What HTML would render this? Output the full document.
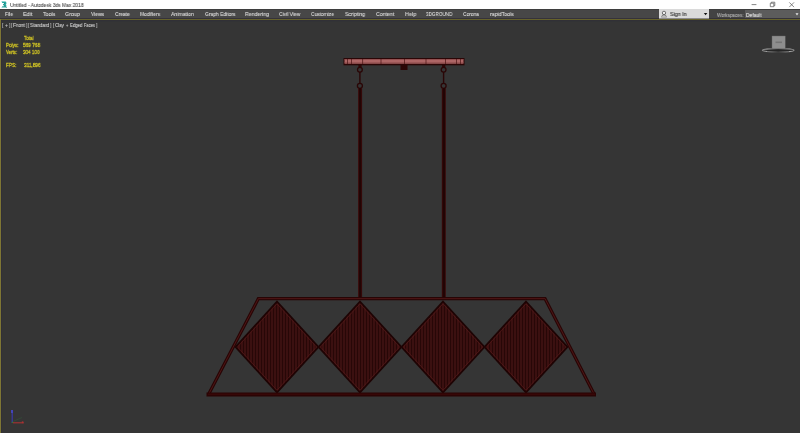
<!DOCTYPE html>
<html><head><meta charset="utf-8">
<style>
html,body{margin:0;padding:0;}
body{width:800px;height:433px;overflow:hidden;position:relative;background:#353535;font-family:"Liberation Sans",sans-serif;}
.abs{position:absolute;}
.t{position:absolute;white-space:nowrap;line-height:1;transform-origin:0 0;-webkit-text-stroke:0.3px currentColor;will-change:transform;}
</style></head><body>
<div class="abs" style="left:0;top:0;width:800px;height:9px;background:#fff"></div>
<div class="abs" style="left:0;top:9px;width:800px;height:9px;background:#474747"></div>
<div class="abs" style="left:0;top:9px;width:800px;height:1px;background:#3e3e3e"></div>
<div class="abs" style="left:0;top:18px;width:800px;height:1px;background:#35323a"></div>
<div class="abs" style="left:0;top:19px;width:800px;height:1px;background:#66622a"></div>
<div class="abs" style="left:0;top:20px;width:800px;height:1px;background:#313036"></div><div class="abs" style="left:0;top:21px;width:800px;height:1px;background:#323335"></div>
<div class="abs" style="left:1px;top:20px;width:1px;height:413px;background:#313036"></div><div class="abs" style="left:0;top:19px;width:1px;height:414px;background:#7e7634"></div>

<!-- app icon -->
<svg class="abs" style="left:0px;top:0px" width="9" height="9" viewBox="0 0 9 9">
  <path d="M1.4 1.6 H5.2 Q6.4 1.6 6.4 3 V3.6 Q6.4 4.4 5.6 4.6 Q6.4 4.9 6.4 5.8 V6.6 Q6.4 7.6 5.2 7.6 H1.4 L2.4 6.3 H4.4 V5.2 H3 V4 H4.4 V2.9 H2.4 Z" fill="#24a8a0"/>
  <path d="M4.4 2.9 V4 M4.4 5.2 V6.3" stroke="#0d6e6a" stroke-width="0.8"/>
  <path d="M5.6 6.8 L6.6 7.8" stroke="#0d6e6a" stroke-width="0.8"/>
</svg>
<!-- window controls -->
<svg class="abs" style="left:748px;top:0px" width="52" height="9" viewBox="0 0 52 9">
  <path d="M3.6 4.6 H8.4" stroke="#666" stroke-width="0.8"/>
  <path d="M22.3 3.2 H25.8 V6.7 H22.3 Z M23.3 3.2 V2.2 H26.8 V5.7 H25.8" fill="none" stroke="#555" stroke-width="0.7"/>
  <path d="M41.3 2.4 L46 7.1 M46 2.4 L41.3 7.1" stroke="#555" stroke-width="0.7"/>
</svg>
<!-- sign in -->
<div class="abs" style="left:659px;top:9px;width:50px;height:9px;background:#dadada"></div><div class="abs" style="left:659px;top:18px;width:50px;height:1px;background:#8c8a8e"></div>
<svg class="abs" style="left:660px;top:10px" width="8" height="8" viewBox="0 0 8 8"><circle cx="4" cy="2.9" r="1.7" fill="#f0f0f0" stroke="#4a4a4a" stroke-width="0.75"/><path d="M1.7 6.6 Q1.9 4.9 4 4.9 Q6.1 4.9 6.3 6.6" fill="none" stroke="#4a4a4a" stroke-width="0.7"/><path d="M1.2 7.1 H6.8" stroke="#6a6a6a" stroke-width="0.6"/></svg>
<svg class="abs" style="left:703px;top:12px" width="5" height="4" viewBox="0 0 5 4"><path d="M0.8 1 H4.4 L2.6 3.3 Z" fill="#111"/></svg>
<!-- workspaces -->
<div class="abs" style="left:709px;top:10px;width:36px;height:8px;background:#434343"></div>
<div class="abs" style="left:744.5px;top:10px;width:55.5px;height:8px;background:#5c5c5c"></div>
<svg class="abs" style="left:795px;top:13px" width="4" height="3" viewBox="0 0 4 3"><path d="M0.5 0.3 H3.5 L2 2.5 Z" fill="#e8e8e8"/></svg>

<div class="t" style="left:9.62px;top:3px;font-size:5.50px;color:#4a4a4a;transform:scaleX(0.895);-webkit-text-stroke:0.1px #4a4a4a;">Untitled - Autodesk 3ds Max 2018</div>
<div class="t" style="left:4.89px;top:11px;font-size:6.10px;color:#dadada;transform:scaleX(0.816);-webkit-text-stroke:0.12px #dadada;">File</div>
<div class="t" style="left:22.55px;top:11px;font-size:6.10px;color:#dadada;transform:scaleX(0.903);-webkit-text-stroke:0.12px #dadada;">Edit</div>
<div class="t" style="left:42.88px;top:11px;font-size:6.10px;color:#dadada;transform:scaleX(0.864);-webkit-text-stroke:0.12px #dadada;">Tools</div>
<div class="t" style="left:65.33px;top:11px;font-size:6.10px;color:#dadada;transform:scaleX(0.878);-webkit-text-stroke:0.12px #dadada;">Group</div>
<div class="t" style="left:91.18px;top:11px;font-size:6.10px;color:#dadada;transform:scaleX(0.804);-webkit-text-stroke:0.12px #dadada;">Views</div>
<div class="t" style="left:114.95px;top:11px;font-size:6.10px;color:#dadada;transform:scaleX(0.806);-webkit-text-stroke:0.12px #dadada;">Create</div>
<div class="t" style="left:140.29px;top:11px;font-size:6.10px;color:#dadada;transform:scaleX(0.812);-webkit-text-stroke:0.12px #dadada;">Modifiers</div>
<div class="t" style="left:171.49px;top:11px;font-size:6.10px;color:#dadada;transform:scaleX(0.842);-webkit-text-stroke:0.12px #dadada;">Animation</div>
<div class="t" style="left:204.95px;top:11px;font-size:6.10px;color:#dadada;transform:scaleX(0.808);-webkit-text-stroke:0.12px #dadada;">Graph Editors</div>
<div class="t" style="left:245.27px;top:11px;font-size:6.10px;color:#dadada;transform:scaleX(0.855);-webkit-text-stroke:0.12px #dadada;">Rendering</div>
<div class="t" style="left:279.25px;top:11px;font-size:6.10px;color:#dadada;transform:scaleX(0.807);-webkit-text-stroke:0.12px #dadada;">Civil View</div>
<div class="t" style="left:311.46px;top:11px;font-size:6.10px;color:#dadada;transform:scaleX(0.797);-webkit-text-stroke:0.12px #dadada;">Customize</div>
<div class="t" style="left:345.26px;top:11px;font-size:6.10px;color:#dadada;transform:scaleX(0.846);-webkit-text-stroke:0.12px #dadada;">Scripting</div>
<div class="t" style="left:375.94px;top:11px;font-size:6.10px;color:#dadada;transform:scaleX(0.857);-webkit-text-stroke:0.12px #dadada;">Content</div>
<div class="t" style="left:405.05px;top:11px;font-size:6.10px;color:#dadada;transform:scaleX(0.891);-webkit-text-stroke:0.12px #dadada;">Help</div>
<div class="t" style="left:426.32px;top:11px;font-size:6.10px;color:#dadada;transform:scaleX(0.756);-webkit-text-stroke:0.12px #dadada;">3DGROUND</div>
<div class="t" style="left:463.46px;top:11px;font-size:6.10px;color:#dadada;transform:scaleX(0.802);-webkit-text-stroke:0.12px #dadada;">Corona</div>
<div class="t" style="left:489.66px;top:11px;font-size:6.10px;color:#dadada;transform:scaleX(0.854);-webkit-text-stroke:0.12px #dadada;">rapidTools</div>
<div class="t" style="left:669.75px;top:12px;font-size:5.70px;color:#383838;transform:scaleX(0.946);-webkit-text-stroke:0.15px #383838;">Sign In</div>
<div class="t" style="left:716.98px;top:12.5px;font-size:5.00px;color:#b4b4b4;transform:scaleX(0.918);-webkit-text-stroke:0.1px #b4b4b4;">Workspaces:</div>
<div class="t" style="left:745.60px;top:12.5px;font-size:5.00px;color:#dcdcdc;transform:scaleX(0.975);-webkit-text-stroke:0.15px #dcdcdc;">Default</div>
<div class="t" style="left:1.90px;top:23px;font-size:5.50px;color:#c8c8c8;transform:scaleX(1.000);-webkit-text-stroke:0px;">[</div>
<div class="t" style="left:4.66px;top:23px;font-size:5.50px;color:#c8c8c8;transform:scaleX(0.898);-webkit-text-stroke:0.15px #c8c8c8;">+</div>
<div class="t" style="left:8.76px;top:23px;font-size:5.50px;color:#c8c8c8;transform:scaleX(1.000);-webkit-text-stroke:0px;">]</div>
<div class="t" style="left:10.80px;top:23px;font-size:5.50px;color:#c8c8c8;transform:scaleX(1.000);-webkit-text-stroke:0px;">[</div>
<div class="t" style="left:12.68px;top:23px;font-size:5.50px;color:#c8c8c8;transform:scaleX(0.940);-webkit-text-stroke:0.15px #c8c8c8;">Front</div>
<div class="t" style="left:25.86px;top:23px;font-size:5.50px;color:#c8c8c8;transform:scaleX(1.000);-webkit-text-stroke:0px;">]</div>
<div class="t" style="left:28.10px;top:23px;font-size:5.50px;color:#c8c8c8;transform:scaleX(1.000);-webkit-text-stroke:0px;">[</div>
<div class="t" style="left:30.08px;top:23px;font-size:5.50px;color:#c8c8c8;transform:scaleX(0.866);-webkit-text-stroke:0.15px #c8c8c8;">Standard</div>
<div class="t" style="left:50.16px;top:23px;font-size:5.50px;color:#c8c8c8;transform:scaleX(1.000);-webkit-text-stroke:0px;">]</div>
<div class="t" style="left:52.80px;top:23px;font-size:5.50px;color:#c8c8c8;transform:scaleX(1.000);-webkit-text-stroke:0px;">[</div>
<div class="t" style="left:55.08px;top:23px;font-size:5.50px;color:#c8c8c8;transform:scaleX(0.803);-webkit-text-stroke:0.15px #c8c8c8;">Clay</div>
<div class="t" style="left:65.80px;top:23px;font-size:5.50px;color:#c8c8c8;transform:scaleX(0.748);-webkit-text-stroke:0.15px #c8c8c8;">+</div>
<div class="t" style="left:69.75px;top:23px;font-size:5.50px;color:#c8c8c8;transform:scaleX(0.775);-webkit-text-stroke:0.15px #c8c8c8;">Edged</div>
<div class="t" style="left:83.88px;top:23px;font-size:5.50px;color:#c8c8c8;transform:scaleX(0.719);-webkit-text-stroke:0.15px #c8c8c8;">Faces</div>
<div class="t" style="left:96.16px;top:23px;font-size:5.50px;color:#c8c8c8;transform:scaleX(1.000);-webkit-text-stroke:0px;">]</div>
<div class="t" style="left:23.70px;top:36px;font-size:5.70px;color:#d2c524;transform:scaleX(0.789);">Total</div>
<div class="t" style="left:5.62px;top:43px;font-size:5.70px;color:#d2c524;transform:scaleX(0.805);">Polys:</div>
<div class="t" style="left:22.61px;top:43px;font-size:5.70px;color:#d2c524;transform:scaleX(0.830);">569 768</div>
<div class="t" style="left:5.98px;top:50px;font-size:5.70px;color:#d2c524;transform:scaleX(0.756);">Verts:</div>
<div class="t" style="left:23.32px;top:50px;font-size:5.70px;color:#d2c524;transform:scaleX(0.808);">304 100</div>
<div class="t" style="left:5.62px;top:63px;font-size:5.70px;color:#d2c524;transform:scaleX(0.814);">FPS:</div>
<div class="t" style="left:23.62px;top:63px;font-size:5.70px;color:#d2c524;transform:scaleX(0.822);">311,896</div>


<!-- viewcube -->
<svg class="abs" style="left:755px;top:28px" width="45" height="28" viewBox="0 0 45 28">
  <defs>
    <linearGradient id="rg" x1="0" x2="1" y1="0" y2="0">
      <stop offset="0" stop-color="#8a8a8a"/><stop offset="0.15" stop-color="#a4a4a4"/>
      <stop offset="0.5" stop-color="#444"/>
      <stop offset="0.85" stop-color="#a4a4a4"/><stop offset="1" stop-color="#8a8a8a"/>
    </linearGradient>
  </defs>
  <ellipse cx="23.2" cy="22.3" rx="15.8" ry="1.7" fill="#262626" stroke="url(#rg)" stroke-width="1.2"/>
  <path d="M12 23.8 Q23 24.6 34 23.8" stroke="#3c3c3c" stroke-width="0.7" fill="none"/>
  <rect x="17" y="8" width="13.2" height="12.8" fill="#8e8e8e" stroke="#666" stroke-width="0.4"/>
  <rect x="20.5" y="13.5" width="6.5" height="1.6" fill="#747474"/>
</svg>

<!-- axis tripod -->
<svg class="abs" style="left:0px;top:400px" width="30" height="30" viewBox="0 0 30 30">
  <path d="M12.2 10 V23" stroke="#3a3aa8" stroke-width="1.2"/>
  <path d="M12 10 V13" stroke="#4646c0" stroke-width="1.8"/>
  <path d="M13 22.8 H23.8" stroke="#a83232" stroke-width="1.1"/>
  <path d="M22.6 21.4 V23.2" stroke="#a83232" stroke-width="1.6"/>
  <path d="M13 21.5 L22 17.5" stroke="#2e6a3a" stroke-width="0.6" opacity="0.6"/>
  <path d="M12.4 21.8 V23" stroke="#2a8a2a" stroke-width="1"/>
</svg>

<!-- lamp -->
<svg class="abs" style="left:0;top:0" width="800" height="433" viewBox="0 0 800 433">
  <defs>
    <pattern id="stripes" patternUnits="userSpaceOnUse" width="3" height="10" x="0.5">
      <rect width="3" height="10" fill="#270707"/>
      <rect x="1" width="0.9" height="10" fill="#521a1a"/>
    </pattern>
  </defs>
  <rect x="343.5" y="58" width="121" height="7.3" fill="#2a0606"/>
  <rect x="344.5" y="59.1" width="119" height="4.6" fill="#ae6666"/>
  <rect x="344.5" y="59.1" width="119" height="0.6" fill="#8a4848"/><rect x="344.5" y="62" width="119" height="0.5" fill="#8a4848"/>
  <g stroke="#4a1414" stroke-width="0.7">
    <path d="M347.5 59 V64 M351.5 59 V64 M362.6 59 V64 M381 59 V64 M404.5 59 V64 M426 59 V64 M445.5 59 V64 M456.5 59 V64 M460.5 59 V64"/>
  </g>
  <rect x="400.5" y="64.5" width="7" height="5.5" fill="#2a0606"/>
  <g fill="none" stroke="#2a0606" stroke-width="1.3">
    <circle cx="359.9" cy="69.8" r="2.4"/>
    <circle cx="359.9" cy="85.8" r="2.5"/>
    <circle cx="443.6" cy="69.8" r="2.4"/>
    <circle cx="443.6" cy="85.8" r="2.5"/>
  </g>
  <rect x="358.4" y="64.8" width="3.2" height="2.8" fill="#2a0606"/>
  <rect x="442.1" y="64.8" width="3.2" height="2.8" fill="#2a0606"/>
  <path d="M359.9 72 V83.5 M443.6 72 V83.5" stroke="#2a0606" stroke-width="1.4"/>
  <path d="M360.1 88 V298 M443.8 88 V298" stroke="#3a0a0a" stroke-width="4"/>
  <path d="M360.1 88 V298 M443.8 88 V298" stroke="#220404" stroke-width="2.2"/>
  <g stroke="#1e0404" stroke-width="1.7" fill="url(#stripes)">
    <path d="M277 301.5 L318.5 347 L277 392.5 L235.5 347 Z"/>
    <path d="M360 301.5 L401.5 347 L360 392.5 L318.5 347 Z"/>
    <path d="M443 301.5 L484.5 347 L443 392.5 L401.5 347 Z"/>
    <path d="M526 301.5 L567.5 347 L526 392.5 L484.5 347 Z"/>
  </g>
  <g stroke="#561a1a" stroke-width="0.7" fill="none">
    <path d="M277 303.8 L316.5 347 L277 390.2 L237.5 347 Z"/>
    <path d="M360 303.8 L399.5 347 L360 390.2 L320.5 347 Z"/>
    <path d="M443 303.8 L482.5 347 L443 390.2 L403.5 347 Z"/>
    <path d="M526 303.8 L565.5 347 L526 390.2 L486.5 347 Z"/>
  </g>
  <path d="M208.5 394.5 L258.4 298.6 H545 L594.3 394.5" fill="none" stroke="#280505" stroke-width="3.3" stroke-linejoin="miter"/>
  <path d="M208.5 394.5 L258.4 298.6 H545 L594.3 394.5" fill="none" stroke="#4e1616" stroke-width="1" stroke-linejoin="miter"/>
  <path d="M206.5 394.6 H596" stroke="#2a0404" stroke-width="4"/>
  <path d="M208 394.2 H595" stroke="#3e0a0a" stroke-width="1"/>
</svg>
</body></html>
